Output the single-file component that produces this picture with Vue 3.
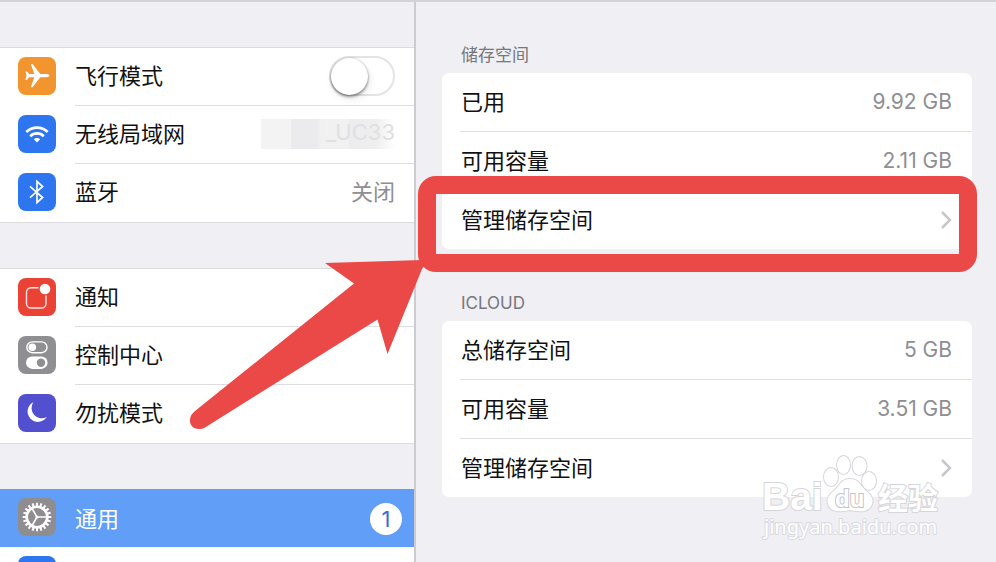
<script setup>
import { ref } from 'vue'

const airplane = ref(false)

const connectivity = [
  { id: 'airplane', label: '飞行模式', tone: 'orange' },
  { id: 'wifi', label: '无线局域网', tone: 'blue' },
  { id: 'bluetooth', label: '蓝牙', tone: 'blue', value: '关闭' },
]
const alerts = [
  { id: 'notice', label: '通知', tone: 'red' },
  { id: 'control', label: '控制中心', tone: 'gray' },
  { id: 'moon', label: '勿扰模式', tone: 'indigo' },
]
const system = [
  { id: 'gear', label: '通用', tone: 'stone', badge: 1, active: true },
  { id: 'display', label: '显示与亮度', tone: 'blue' },
]
const groups = [connectivity, alerts, system]

const storage = [
  {
    title: '储存空间',
    rows: [
      { label: '已用', value: '9.92 GB' },
      { label: '可用容量', value: '2.11 GB' },
      { label: '管理储存空间', link: true, marked: true },
    ],
  },
  {
    title: 'ICLOUD',
    rows: [
      { label: '总储存空间', value: '5 GB' },
      { label: '可用容量', value: '3.51 GB' },
      { label: '管理储存空间', link: true },
    ],
  },
]
const teeth = Array.from({ length: 20 }, (_, i) => i * 18)
</script>

<template>
  <div class="screen">
    <nav class="sidebar">
      <ul v-for="(group, g) in groups" :key="g" class="group">
        <li v-for="item in group" :key="item.id" class="item" :class="{ active: item.active }">
          <span class="icon" :class="item.tone">
            <svg viewBox="0 0 38 38" aria-hidden="true">
              <path v-if="item.id === 'airplane'" fill="#fff" d="M31.500 18.600c0-.9-1.300-1.500-3-1.500h-6.200L14.700 7.300c-.8-.8-2-.3-1.600.8l3.200 9h-5.200L9 14.600H7.400l1.200 4-1.200 4.200H9l2.100-2.600h5.200l-3.200 9c-.4 1.100.8 1.600 1.600.8l7.600-9.800h6.200c1.700 0 3-.7 3-1.600z" />
              <g v-else-if="item.id === 'wifi'" fill="none" stroke="#fff" stroke-width="2.600">
                <path d="M8.300 17a15.200 15.200 0 0 1 21.400 0" />
                <path d="M12.200 21.200a9.700 9.700 0 0 1 13.600 0" />
                <path d="M19 27.600l-3.200-3.300a4.600 4.600 0 0 1 6.400 0z" fill="#fff" stroke="none" />
              </g>
              <path v-else-if="item.id === 'bluetooth'" fill="none" stroke="#fff" stroke-width="1.700" d="M12 13.300l12.600 11.200L19 29.500V8.500l5.600 5L12 24.700" />
              <g v-else-if="item.id === 'notice'">
                <path fill="none" stroke="#fff" stroke-opacity=".85" stroke-width="1.400" d="M20.500 9.700H13a4.500 4.500 0 0 0-4.500 4.500v11.300A4.500 4.500 0 0 0 13 30h10.500a4.500 4.500 0 0 0 4.500-4.500v-8" />
                <circle cx="27" cy="11" r="5.300" fill="#fff" />
              </g>
              <g v-else-if="item.id === 'control'">
                <rect x="8.800" y="5.900" width="20.200" height="10.800" rx="5.400" fill="none" stroke="#fff" stroke-width="1.400" />
                <circle cx="14.300" cy="11.300" r="3.800" fill="#fff" />
                <rect x="8" y="20.500" width="21.600" height="12.400" rx="6.200" fill="#fff" />
                <circle cx="23" cy="26.700" r="4.200" fill="#8e8e93" />
              </g>
              <path v-else-if="item.id === 'moon'" fill="#fff" d="M15.300 8.200a10.400 10.400 0 1 0 13.500 14.800A10.300 10.300 0 0 1 15.300 8.200z" />
              <g v-else-if="item.id === 'gear'" fill="none" stroke="#fff">
                <circle cx="19" cy="19" r="10.300" stroke-width="2.600" />
                <path v-for="a in teeth" :key="a" d="M19 8.500V4.700" stroke-width="2" :transform="`rotate(${a} 19 19)`" />
                <path stroke-width="1.500" d="M19 19h10.500M19 19l-5.200-9M19 19l-5.200 9" />
                <circle cx="19" cy="19" r="1.500" fill="#fff" stroke="none" />
              </g>
            </svg>
          </span>
          <div class="item-body">
            <label v-if="item.id === 'airplane'" for="airplane-mode">{{ item.label }}</label>
            <a v-else href="#">{{ item.label }}</a>
            <input v-if="item.id === 'airplane'" id="airplane-mode" v-model="airplane" class="switch" type="checkbox" role="switch" />
            <span v-else-if="item.id === 'wifi'" class="network">_UC33</span>
            <span v-else-if="item.value" class="value">{{ item.value }}</span>
            <span v-else-if="item.badge" class="badge">{{ item.badge }}</span>
          </div>
        </li>
      </ul>
    </nav>

    <main class="detail">
      <section v-for="section in storage" :key="section.title" class="section">
        <h2>{{ section.title }}</h2>
        <ul class="card">
          <li v-for="row in section.rows" :key="row.label" class="row">
            <a v-if="row.link" href="#">{{ row.label }}</a>
            <span v-else>{{ row.label }}</span>
            <span v-if="row.value" class="value size">{{ row.value }}</span>
            <svg v-if="row.link" class="chevron" viewBox="0 0 12 20" aria-hidden="true">
              <path d="M2 2l8 8-8 8" fill="none" stroke="#c7c7cc" stroke-width="2.500" />
            </svg>
            <div v-if="row.marked" class="marker">
              <svg class="arrow" viewBox="0 0 240 172" aria-hidden="true">
                <path fill="#eb4848" d="M137 3L234 0l4 3-4 6-34.500 85L189.500 59.500 17 167.500C9 171.500 1 167 2 159.500c0-3 2-6 5-8.500L166 23.500z" />
              </svg>
            </div>
          </li>
        </ul>
      </section>
    </main>

    <svg class="watermark" viewBox="0 0 190 96" aria-hidden="true">
      <g class="brand">
        <text x="2" y="60" font-size="39">Bai</text>
        <ellipse cx="71" cy="27" rx="7" ry="9" />
        <ellipse cx="83.500" cy="15" rx="6.500" ry="9" />
        <ellipse cx="99.500" cy="16" rx="7" ry="9" />
        <ellipse cx="109" cy="31" rx="7" ry="9" />
        <path d="M90 29c-9 0-10 6-15 11-5 4-9 8-7 14 3 9 12 8 22 6 10 2 19 3 22-6 2-6-2-10-7-14-5-5-6-11-15-11z" />
        <text x="75" y="57" font-size="24" class="inner">du</text>
        <text x="118" y="59" font-size="30" class="han">经验</text>
      </g>
      <text x="4" y="84" font-size="20" class="site">jingyan.baidu.com</text>
    </svg>
  </div>
</template>

<style>
body {
  margin: 0;
  background: #efeff4;
}
</style>

<style scoped>
.screen {
  position: relative;
  display: grid;
  grid-template-columns: 416fr 580fr;
  height: 100vh;
  box-sizing: border-box;
  overflow: hidden;
  border-top: 2px solid #d2d2d7;
  background: #efeff4;
  color: #111;
  font: 22px/32px Inter, "Noto Sans CJK SC", sans-serif;
}
ul {
  margin: 0;
  padding: 0;
  list-style: none;
}
a {
  color: inherit;
  text-decoration: none;
}
.sidebar {
  display: flex;
  flex-direction: column;
  gap: 45px;
  padding-top: 45px;
  border-right: 2px solid #cbcbd0;
  min-width: 0;
}
.group {
  background: #fff;
  border-top: 1px solid #dcdce0;
  border-bottom: 1px solid #dcdce0;
}
.group:last-child {
  border-top: 0;
}
.item {
  display: flex;
  align-items: flex-start;
  gap: 19px;
  height: 58px;
  padding-left: 18px;
}
.item-body {
  flex: 1;
  display: flex;
  align-items: center;
  justify-content: space-between;
  height: 55px;
  padding: 0 19px 2px 0;
  border-bottom: 1px solid #dedee2;
}
.item:last-child .item-body {
  border-color: transparent;
}
.active {
  background: #619ef7;
  color: #fff;
}
.active .item-body {
  border-color: transparent;
  padding: 2px 12px 0 0;
}
.icon {
  width: 38px;
  height: 38px;
  margin-top: 9px;
  border-radius: 8px;
}
.icon svg {
  display: block;
}
.orange { background: #f2952f; }
.blue { background: #2e76f0; }
.red { background: #ea4335; }
.gray { background: #8e8e93; }
.indigo { background: #5350cf; }
.stone { background: #8f8d90; }
.value {
  color: #8e8e93;
}
.size {
  font-size: 21px;
}
.switch {
  appearance: none;
  width: 66px;
  height: 40px;
  margin: 0;
  border: 2px solid #e4e4e6;
  border-radius: 20px;
  background: #fff;
}
.switch::before {
  content: "";
  display: block;
  width: 37px;
  height: 37px;
  border-radius: 50%;
  background: #fff;
  box-shadow: 0 2px 3px rgba(0, 0, 0, 0.4), 0 0 2px rgba(0, 0, 0, 0.25), 2px 4px 8px rgba(0, 0, 0, 0.08);
}
.switch:checked {
  background: #4cd964;
}
.switch:checked::before {
  margin-left: 25px;
}
.network {
  width: 134px;
  height: 30px;
  line-height: 26px;
  text-align: right;
  color: #e0e0e2;
  background: linear-gradient(90deg, #f3f3f4 30px, #ebebed 30px, #ebebed 56px, #f1f1f2 60px, #f1f1f2 88px, #ececee 88px, #efeff0 116px, #fff 134px);
}
.badge {
  width: 32px;
  border-radius: 50%;
  background: #fff;
  color: #3f6bd0;
  text-align: center;
}
.detail {
  padding: 39px 24px 0 26px;
  min-width: 0;
}
.section {
  margin-bottom: 40px;
}
h2 {
  margin: 0;
  padding: 0 19px 4px;
  font-size: 17px;
  font-weight: 400;
  line-height: 28px;
  color: #77777c;
}
.card {
  background: #fff;
  border-radius: 7px;
}
.row {
  position: relative;
  display: flex;
  align-items: center;
  justify-content: space-between;
  height: 58px;
  padding: 0 20px 0 19px;
}
.row + .row {
  border-top: 1px solid transparent;
  border-image: linear-gradient(90deg, transparent 19px, #dedee2 19px) 1;
}
.chevron {
  width: 12px;
  height: 20px;
}
.marker {
  position: absolute;
  z-index: 2;
  inset: -15px -5px -23px -24px;
  border: 18px solid #eb4848;
  border-radius: 18px;
  pointer-events: none;
}
.arrow {
  position: absolute;
  top: 66px;
  left: -248px;
  width: 240px;
  height: 172px;
}
.watermark {
  position: absolute;
  right: 46px;
  bottom: 16px;
  width: 190px;
  height: 96px;
}
.brand {
  fill: #fff;
  stroke: #d6d6da;
  stroke-width: 2px;
  paint-order: stroke;
  font-family: "Liberation Sans", sans-serif;
  font-weight: 700;
}
.inner {
  stroke: #c4c4c9;
}
.han {
  font-family: "Noto Sans CJK SC", sans-serif;
}
.site {
  fill: #fff;
  stroke: #dadade;
  stroke-width: 2px;
  paint-order: stroke;
  font-family: "Noto Sans", sans-serif;
}
</style>
